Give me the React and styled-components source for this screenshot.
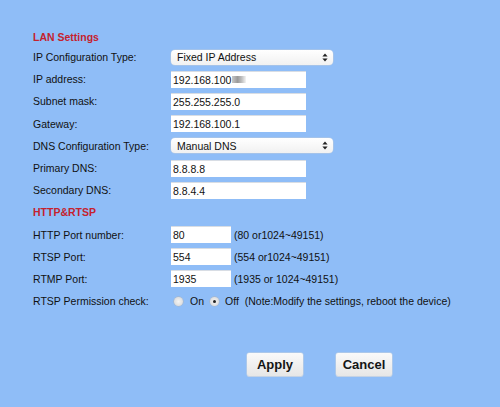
import { Fragment } from "react";
import styled, { createGlobalStyle } from "styled-components";

const GlobalStyle = createGlobalStyle`
  body {
    margin: 0;
    background: #8fbdf7;
    font-family: "Liberation Sans", Arial, Helvetica, sans-serif;
  }
`;

const Page = styled.div`
  width: 500px;
  height: 407px;
  background: #8fbdf7;
  padding: 28px 0 0 33px;
  box-sizing: border-box;
`;

const Form = styled.div`
  display: grid;
  grid-template-columns: 138px auto;
  grid-template-rows: 18px repeat(12, 22.2px);
  align-items: center;
`;

const Section = styled.div`
  grid-column: 1 / 3;
  color: #c5222e;
  font-weight: bold;
  font-size: 10.5px;
`;

const Label = styled.div`
  font-size: 10.5px;
  color: #111;
`;

const Cell = styled.div`
  display: flex;
  align-items: center;
  font-size: 10.5px;
  color: #111;
`;

const Select = styled.div`
  width: 162px;
  height: 15px;
  border-radius: 4px;
  background: linear-gradient(#ffffff, #f1f1f1);
  box-shadow: 0 0 0 0.5px #b9c9dd;
  display: flex;
  align-items: center;
  justify-content: space-between;
  padding: 0 5px 0 6px;
  box-sizing: border-box;
  font-size: 10.5px;
  color: #111;
`;

const Input = styled.div`
  width: ${(props) => props.w || "135px"};
  height: 17px;
  background: #fff;
  border-top: 1px solid #d8dde4;
  display: flex;
  align-items: center;
  padding-left: 2px;
  box-sizing: border-box;
  font-size: 10.5px;
  color: #111;
`;

const Blur = styled.span`
  display: inline-block;
  width: 14px;
  height: 7px;
  margin-left: 1px;
  background: linear-gradient(90deg, #c8c8c8, #9a9a9a 40%, #c0c0c0 70%, #f4f4f4);
`;

const Hint = styled.span`
  margin-left: 3px;
  font-size: 10.5px;
`;

const Radio = styled.span`
  display: inline-block;
  width: 9px;
  height: 9px;
  border-radius: 50%;
  background: radial-gradient(circle, #f4f4f4, #d4d4d4);
  box-shadow: 0 0 0 0.5px #b5b5b5;
  margin: 0 ${(props) => props.mr || "6px"} 0 ${(props) => props.ml || "3px"};
  position: relative;
  &::after {
    content: "";
    display: ${(props) => (props.checked ? "block" : "none")};
    position: absolute;
    left: 3px;
    top: 3px;
    width: 3px;
    height: 3px;
    border-radius: 50%;
    background: #222;
  }
`;

const Buttons = styled.div`
  display: flex;
  gap: 33px;
  padding-left: 214px;
  margin-top: 41px;
`;

const Button = styled.button`
  width: 56px;
  height: 23px;
  border: none;
  border-radius: 2px;
  background: linear-gradient(#fafafa, #e6e6e6);
  box-shadow: 0 1px 0 #c4d2e4, 0 0 0 0.5px #c9d3de;
  font-family: "Liberation Sans", Arial, sans-serif;
  font-weight: bold;
  font-size: 13px;
  color: #151515;
  padding: 0;
`;

const Arrows = () => (
  <svg width="6" height="9" viewBox="0 0 6 9">
    <path d="M3 0.5 L5.6 3.6 H0.4 Z" fill="#222" />
    <path d="M3 8.5 L5.6 5.4 H0.4 Z" fill="#222" />
  </svg>
);

const lanRows = [
  { label: "IP address:", value: "192.168.100", blur: true },
  { label: "Subnet mask:", value: "255.255.255.0" },
  { label: "Gateway:", value: "192.168.100.1" },
];

const dnsRows = [
  { label: "Primary DNS:", value: "8.8.8.8" },
  { label: "Secondary DNS:", value: "8.8.4.4" },
];

const portRows = [
  { label: "HTTP Port number:", value: "80", hint: "(80 or1024~49151)" },
  { label: "RTSP Port:", value: "554", hint: "(554 or1024~49151)" },
  { label: "RTMP Port:", value: "1935", hint: "(1935 or 1024~49151)" },
];

const App = () => {
  return (
    <Page>
      <GlobalStyle />
      <Form>
        <Section>LAN Settings</Section>
        <Label>IP Configuration Type:</Label>
        <Cell>
          <Select>
            <span>Fixed IP Address</span>
            <Arrows />
          </Select>
        </Cell>
        {lanRows.map((row) => (
          <Fragment key={row.label}>
            <Label>{row.label}</Label>
            <Cell>
              <Input>
                {row.value}
                {row.blur && <Blur />}
              </Input>
            </Cell>
          </Fragment>
        ))}
        <Label>DNS Configuration Type:</Label>
        <Cell>
          <Select>
            <span>Manual DNS</span>
            <Arrows />
          </Select>
        </Cell>
        {dnsRows.map((row) => (
          <Fragment key={row.label}>
            <Label>{row.label}</Label>
            <Cell>
              <Input>{row.value}</Input>
            </Cell>
          </Fragment>
        ))}
        <Section>HTTP&amp;RTSP</Section>
        {portRows.map((row) => (
          <Fragment key={row.label}>
            <Label>{row.label}</Label>
            <Cell>
              <Input w="60px">{row.value}</Input>
              <Hint>{row.hint}</Hint>
            </Cell>
          </Fragment>
        ))}
        <Label>RTSP Permission check:</Label>
        <Cell>
          <Radio ml="3px" mr="7px" />
          On
          <Radio ml="6px" mr="6px" checked />
          Off
          <Hint>&nbsp;(Note:Modify the settings, reboot the device)</Hint>
        </Cell>
      </Form>
      <Buttons>
        <Button>Apply</Button>
        <Button>Cancel</Button>
      </Buttons>
    </Page>
  );
};

export default App;
